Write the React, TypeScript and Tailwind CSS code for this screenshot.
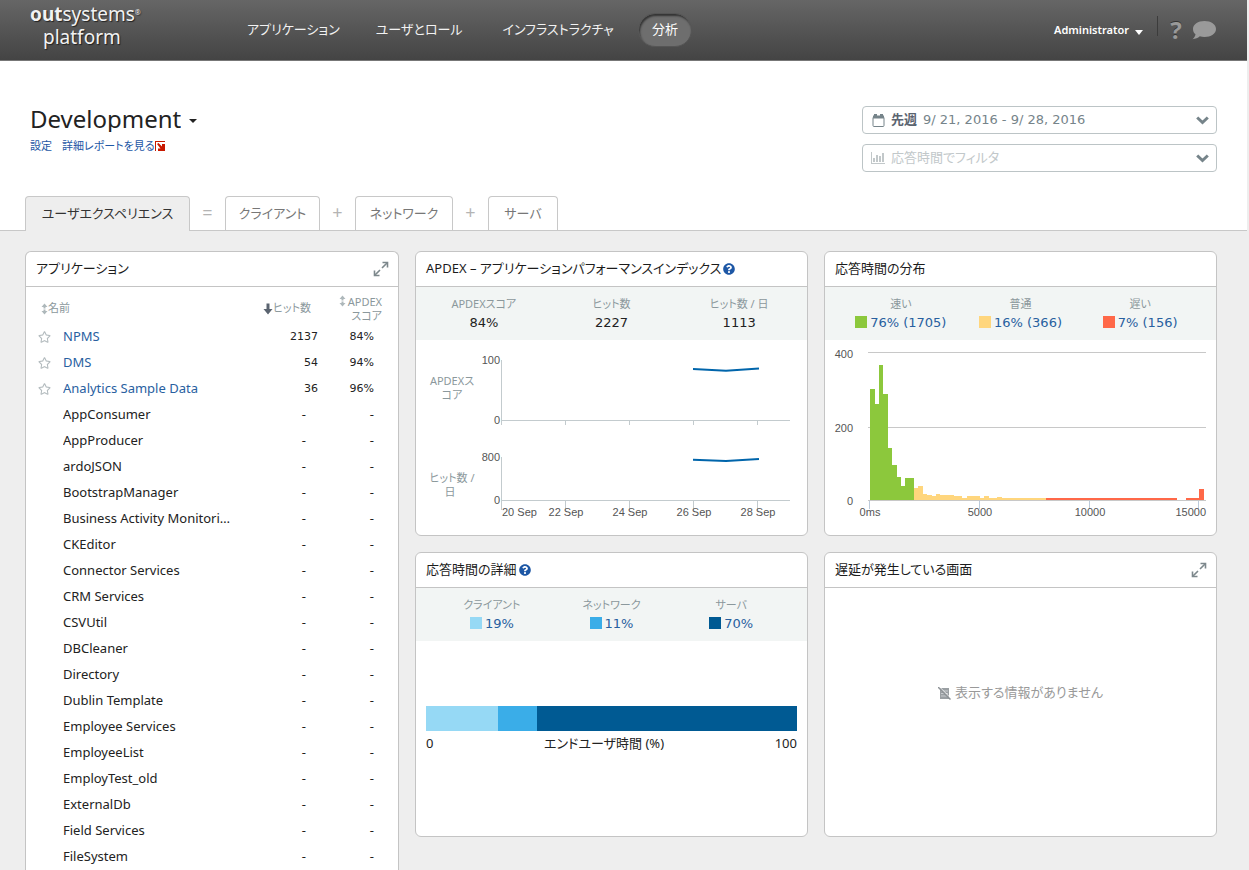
import React from 'react';
import { FaQuestionCircle, FaRegStar } from 'react-icons/fa';

interface AppRow {
  name: string;
  hits?: number;
  apdex?: string;
}

const apps: AppRow[] = [
  { name: 'NPMS', hits: 2137, apdex: '84%' },
  { name: 'DMS', hits: 54, apdex: '94%' },
  { name: 'Analytics Sample Data', hits: 36, apdex: '96%' },
  { name: 'AppConsumer' },
  { name: 'AppProducer' },
  { name: 'ardoJSON' },
  { name: 'BootstrapManager' },
  { name: 'Business Activity Monitori…' },
  { name: 'CKEditor' },
  { name: 'Connector Services' },
  { name: 'CRM Services' },
  { name: 'CSVUtil' },
  { name: 'DBCleaner' },
  { name: 'Directory' },
  { name: 'Dublin Template' },
  { name: 'Employee Services' },
  { name: 'EmployeeList' },
  { name: 'EmployTest_old' },
  { name: 'ExternalDb' },
  { name: 'Field Services' },
  { name: 'FileSystem' },
];

// [x, width, top] of each histogram bar, the baseline is at y = 160
const fastBars = [
  [45, 5, 49], [50, 4, 64], [54, 4, 25], [58, 5, 54], [63, 4, 108],
  [67, 5, 125], [72, 4, 137], [76, 4, 146], [80, 9, 138],
];
const normalBars = [
  [89, 4, 148], [93, 5, 146], [98, 4, 154], [102, 5, 155], [107, 4, 156],
  [111, 4, 154], [115, 14, 155], [129, 8, 156], [137, 5, 158], [142, 13, 156],
  [155, 4, 158], [159, 5, 156], [164, 8, 158], [172, 5, 157], [177, 44, 158],
];
const slowBars = [[221, 131, 158], [361, 13, 158], [374, 5, 149]];

const breakdown = [
  { label: 'クライアント', value: '19%', share: 19.4, box: 'bg-[#96d9f5]' },
  { label: 'ネットワーク', value: '11%', share: 10.5, box: 'bg-[#3aade8]' },
  { label: 'サーバ', value: '70%', share: 70.1, box: 'bg-[#005a93]' },
];

const distribution = [
  { label: '速い', value: '76% (1705)', box: 'bg-[#8cc83c]' },
  { label: '普通', value: '16% (366)', box: 'bg-[#ffd67d]' },
  { label: '遅い', value: '7% (156)', box: 'bg-[#ff6848]' },
];

const tabClass = 'h-[34px] rounded-t border border-b-0 border-[#c8c8c8] bg-white text-[#777]';

const ExpandIcon: React.FC = () => (
  <svg width="16" height="16" viewBox="0 0 16 16" fill="none" stroke="#7d888c" strokeWidth="1.6">
    <path d="M9.500 1.500H14.500V6.500M1.500 9.500V14.500H6.500" />
    <path d="M14 2L9 7M7 9L2 14" />
  </svg>
);

const ChevronIcon: React.FC = () => (
  <svg width="13" height="9" viewBox="0 0 13 9" fill="none" stroke="#76848a" strokeWidth="3" className="pointer-events-none absolute right-[7px]">
    <path d="M1.200 1.500L6.500 6.500L11.800 1.500" />
  </svg>
);

const SortIcon: React.FC = () => (
  <svg width="7" height="12" viewBox="0 0 7 12" fill="#aeb8bb" className="shrink-0">
    <path d="M3.500 0.500L6.500 4H4.500V5.500H2.500V4H0.500zM3.500 11.500L6.500 8H4.500V6.500H2.500V8H0.500z" />
  </svg>
);

interface CardProps {
  title: string;
  help?: boolean;
  expand?: boolean;
  className?: string;
  children?: React.ReactNode;
}

const Card: React.FC<CardProps> = ({ title, help, expand, className = 'rounded-md', children }) => (
  <section className={`flex min-h-[285px] flex-col overflow-hidden border border-[#c4c4c4] bg-white ${className}`}>
    <header className="flex h-[35px] shrink-0 items-center border-b border-[#c4c4c4] pr-[9px] pl-[10px]">
      <h2 className="text-[13px] text-[#1c1c1c]">{title}</h2>
      {help && (
        <button aria-label="ヘルプ" className="ml-[2px] text-[#1d57a5]">
          <FaQuestionCircle className="h-3 w-3" />
        </button>
      )}
      {expand && (
        <button aria-label="拡大" className="ml-auto">
          <ExpandIcon />
        </button>
      )}
    </header>
    {children}
  </section>
);

interface StatsProps {
  items: { label: string; value: string; box?: string }[];
  className: string;
}

const Stats: React.FC<StatsProps> = ({ items, className }) => (
  <dl className={`grid h-[53px] shrink-0 grid-cols-3 bg-[#f2f5f4] pt-2 text-center ${className}`}>
    {items.map(item => (
      <div key={item.label}>
        <dt className="text-[11px] leading-[18px] text-[#8b989c]">{item.label}</dt>
        <dd className="flex items-center justify-center gap-[3px] font-['DejaVu_Sans'] text-[13px] leading-5">
          {item.box ? (
            <>
              <span className={`mb-[2px] h-3 w-3 ${item.box}`} />
              <a href="#" className="text-[#28609f]">{item.value}</a>
            </>
          ) : (
            <span className="text-[#222]">{item.value}</span>
          )}
        </dd>
      </div>
    ))}
  </dl>
);

const ApdexChart: React.FC = () => (
  <svg viewBox="0 0 391 195" className="w-full">
    <g stroke="#c3cbce" fill="none">
      <path d="M85.500 20V85M85 80.500H374M149.500 80V85M213.500 80V85M277.500 80V85M341.500 80V85" />
      <path d="M85.500 117V170M85 160.500H374M149.500 160V170M213.500 160V170M277.500 160V170M341.500 160V170" />
    </g>
    <g stroke="#0065ab" strokeWidth="2" fill="none">
      <path d="M277 29L310 30.800L343 28.400" />
      <path d="M277 119.700L310 121L343 119" />
    </g>
    <g fontSize="11" fill="#555" className="font-['Liberation_Sans']">
      <g textAnchor="end">
        <text x="84" y="24">100</text>
        <text x="84" y="84">0</text>
        <text x="84" y="121">800</text>
        <text x="84" y="164">0</text>
      </g>
      <text x="86" y="176">20 Sep</text>
      <g textAnchor="middle">
        <text x="150" y="176">22 Sep</text>
        <text x="214" y="176">24 Sep</text>
        <text x="278" y="176">26 Sep</text>
        <text x="342" y="176">28 Sep</text>
      </g>
    </g>
    <g fontSize="11" fill="#8b989c" textAnchor="middle">
      <text x="36" y="45">APDEXス</text>
      <text x="36" y="59">コア</text>
      <text x="36" y="142">ヒット数 /</text>
      <text x="34" y="156">日</text>
    </g>
  </svg>
);

const Bars: React.FC<{ bars: number[][]; fill: string }> = ({ bars, fill }) => (
  <g fill={fill}>
    {bars.map(([x, width, top]) => (
      <rect key={x} x={x} y={top} width={width} height={160 - top} />
    ))}
  </g>
);

const DistributionChart: React.FC = () => (
  <svg viewBox="0 0 391 195" className="w-full" shapeRendering="crispEdges">
    <path d="M43 12.500H381M43 87.500H381M43 160.500H381" stroke="#c8c8c8" />
    <path d="M44.500 161V169M154.500 161V169M264.500 161V169M373.500 161V169" stroke="#bccbdc" />
    <Bars bars={fastBars} fill="#8cc83c" />
    <Bars bars={normalBars} fill="#ffd67d" />
    <Bars bars={slowBars} fill="#ff6848" />
    <g fontSize="11" fill="#555" className="font-['Liberation_Sans']">
      <g textAnchor="end">
        <text x="28" y="18">400</text>
        <text x="28" y="92">200</text>
        <text x="28" y="165">0</text>
        <text x="381" y="176">15000</text>
      </g>
      <g textAnchor="middle">
        <text x="45" y="176">0ms</text>
        <text x="155" y="176">5000</text>
        <text x="265" y="176">10000</text>
      </g>
    </g>
  </svg>
);

const AppsTable: React.FC = () => (
  <table className="w-full table-fixed border-collapse text-[13px] text-[#222]">
    <colgroup>
      <col className="w-[37px]" />
      <col />
      <col className="w-[60px]" />
      <col className="w-[80px]" />
    </colgroup>
    <thead className="text-[11px] text-[#8b989c]">
      <tr className="h-[37px]">
        <th colSpan={2} className="pt-[6px] pl-[15px] text-left font-normal">
          <button className="flex items-center">
            <SortIcon />
            名前
          </button>
        </th>
        <th className="pt-[6px] pr-[7px] font-normal">
          <button className="float-right flex items-center whitespace-nowrap">
            <svg width="10" height="12" viewBox="0 0 10 12" fill="#5b6470">
              <path d="M3.500 0.500H6.500V6H9.500L5 11.500L0.500 6H3.500z" />
            </svg>
            ヒット数
          </button>
        </th>
        <th className="pt-[6px] pr-4 font-normal">
          <button className="ml-auto flex items-start gap-[2px] text-right leading-[14px]">
            <SortIcon />
            <span>APDEX<br />スコア</span>
          </button>
        </th>
      </tr>
    </thead>
    <tbody>
      {apps.map(app => (
        <tr key={app.name} className="h-[26px]">
          <td className="pl-3">
            {app.hits && (
              <button aria-label="お気に入り" className="block text-[#b4bcbf]">
                <FaRegStar className="h-3 w-[13px]" />
              </button>
            )}
          </td>
          <td className="truncate">
            {app.hits ? <a href="#" className="text-[#28609f]">{app.name}</a> : app.name}
          </td>
          <td className={app.hits ? "text-right font-['DejaVu_Sans'] text-[11px]" : 'pr-3 text-right'}>
            {app.hits ?? '-'}
          </td>
          <td className={app.hits ? "pr-6 text-right font-['DejaVu_Sans'] text-[11px]" : 'pr-6 text-right'}>
            {app.apdex ?? '-'}
          </td>
        </tr>
      ))}
    </tbody>
  </table>
);

const TopBar: React.FC = () => (
  <header className="flex h-[61px] shrink-0 items-center border-b border-[#777] bg-linear-to-b from-[#666] to-[#444] pr-[31px] pl-[30px] text-[#f2f2f2]">
    <a href="#" className="mb-2 block w-[217px] text-[19px] leading-[23px] text-shadow-[1px_1px_1px_#222]">
      <span className="flex">
        <b>out</b>systems<sup className="top-1 text-[7px] leading-3">®</sup>
      </span>
      <span className="block pl-[13px]">platform</span>
    </a>
    <nav className="flex items-center text-[13px]">
      <a href="#" className="mr-9">アプリケーション</a>
      <a href="#" className="mr-10">ユーザとロール</a>
      <a href="#" className="mr-6">インフラストラクチャ</a>
      <a href="#" className="flex h-[34px] w-[54px] items-center justify-center rounded-full border border-[#555] bg-[#6e6e6e] text-white inset-shadow-[1px_2px_2px_#333]">分析</a>
    </nav>
    <div className="ml-auto flex items-center">
      <button className="flex items-center gap-[6px] text-[11px] font-semibold text-white">
        Administrator
        <svg width="8" height="5" viewBox="0 0 8 5" fill="#fff" className="mt-1"><path d="M0 0H8L4 5z" /></svg>
      </button>
      <span className="mr-3 mb-2 ml-[14px] h-5 w-px bg-[#3c3c3c]" />
      <button aria-label="ヘルプ" className="w-3 text-2xl leading-6 font-bold text-[#999] text-shadow-[0_-1px_0_#333]">?</button>
      <button aria-label="フィードバック" className="ml-[10px]">
        <svg width="24" height="19" viewBox="0 0 24 19" fill="#9a9a9a">
          <path d="M12.500 0C19 0 24 3.500 24 8C24 12.500 19 16 12.500 16C10.800 16 9.200 15.800 7.800 15.300C5.800 17 3.500 18 .5 18.200C2 17 3.200 15.500 3.500 13.300C1.800 12 1 10 1 8C1 3.500 6 0 12.500 0z" />
        </svg>
      </button>
    </div>
  </header>
);

const Filters: React.FC = () => (
  <div className="flex w-[355px] flex-col gap-[10px] text-[13px]">
    <div className="relative flex h-7 items-center rounded border border-[#bcc4c6] bg-white pl-[9px]">
      <svg width="13" height="13" viewBox="0 0 13 13" fill="none" stroke="#76848a" className="mr-[6px] shrink-0">
        <path d="M1 3.500H12V11.500Q12 12.500 11 12.500H2Q1 12.500 1 11.500z" />
        <path d="M1 3H12" strokeWidth="3" />
        <path d="M3.500 0V3M9.500 0V3" strokeWidth="3" />
      </svg>
      <label htmlFor="period" className="mr-[6px] font-bold text-[#5b6470]">先週</label>
      <select id="period" className="h-full grow appearance-none bg-transparent font-['DejaVu_Sans'] text-[#76848a]">
        <option>9/ 21, 2016 - 9/ 28, 2016</option>
      </select>
      <ChevronIcon />
    </div>
    <div className="relative flex h-7 items-center rounded border border-[#bcc4c6] bg-white pl-2">
      <svg width="14" height="12" viewBox="0 0 14 12" className="mr-[6px] shrink-0" fill="#c2c8ca">
        <path d="M0 0H1V11H14V12H0zM2 6H4V10H2zM5 3H7V10H5zM8 4H10V10H8zM11 1H13V10H11z" />
      </svg>
      <select aria-label="応答時間でフィルタ" className="h-full grow appearance-none bg-transparent text-[#c2c8ca]">
        <option>応答時間でフィルタ</option>
      </select>
      <ChevronIcon />
    </div>
  </div>
);

const App: React.FC = () => {
  return (
    <div className="h-screen overflow-hidden bg-[#eee] pr-[2px] font-['Noto_Sans','Noto_Sans_CJK_JP',sans-serif] [font-feature-settings:'palt']">
      <div className="flex h-full flex-col">
        <TopBar />

        <div className="flex shrink-0 items-start justify-between bg-white pr-[30px] pl-[30px] pt-[45px]">
          <div className="h-[90px]">
            <h1 className="flex items-center gap-2 text-2xl leading-[26px] text-[#222]">
              <select aria-label="環境" className="field-sizing-content appearance-none">
                <option>Development</option>
              </select>
              <svg width="8" height="4" viewBox="0 0 8 4" fill="#222" className="mt-1"><path d="M0 0H8L4 4z" /></svg>
            </h1>
            <div className="mt-[6px] flex items-center text-[11px] leading-4 text-[#1d57a5]">
              <a href="#" className="mr-[10px]">設定</a>
              <a href="#" className="flex items-center">
                詳細レポートを見る
                <svg width="10" height="10" viewBox="0 0 10 10" fill="#c81900">
                  <path d="M0 0H10V1H1V10H0z" />
                  <path d="M2 3L3.500 2L7 5.500V3H10V10H3V7.500H5.500z" />
                </svg>
              </a>
            </div>
          </div>
          <Filters />
        </div>

        <div role="tablist" className="flex shrink-0 items-end border-b border-[#c8c8c8] bg-white pl-[25px] text-[13px]">
          <button role="tab" aria-selected="true" className="-mb-px h-[35px] w-[165px] rounded-t border border-b-0 border-[#c8c8c8] bg-[#eee] text-[#333]">ユーザエクスペリエンス</button>
          <span className="w-[35px] pb-1 text-center text-lg text-[#b4b4b4]">=</span>
          <button role="tab" className={`w-[95px] ${tabClass}`}>クライアント</button>
          <span className="w-[35px] pb-1 text-center text-lg text-[#b4b4b4]">+</span>
          <button role="tab" className={`w-[98px] ${tabClass}`}>ネットワーク</button>
          <span className="w-[35px] pb-1 text-center text-lg text-[#b4b4b4]">+</span>
          <button role="tab" className={`w-[70px] ${tabClass}`}>サーバ</button>
        </div>

        <main className="grid min-h-0 grow grid-cols-[374fr_802fr] gap-4 pt-5 pr-[30px] pl-[25px]">
          <Card title="アプリケーション" expand className="rounded-t-md border-b-0">
            <AppsTable />
          </Card>

          <div className="grid grid-cols-2 content-start gap-4">
            <Card title="APDEX – アプリケーションパフォーマンスインデックス" help>
              <Stats
                className="px-1"
                items={[
                  { label: 'APDEXスコア', value: '84%' },
                  { label: 'ヒット数', value: '2227' },
                  { label: 'ヒット数 / 日', value: '1113' },
                ]}
              />
              <ApdexChart />
            </Card>

            <Card title="応答時間の分布">
              <Stats className="px-4" items={distribution} />
              <DistributionChart />
            </Card>

            <Card title="応答時間の詳細" help>
              <Stats className="px-4" items={breakdown} />
              <div className="px-[10px] pt-[65px] text-[13px] text-[#222]">
                <div className="flex h-[25px]">
                  {breakdown.map(part => (
                    <div key={part.label} className={part.box} style={{ width: `${part.share}%` }} />
                  ))}
                </div>
                <div className="mt-[2px] flex justify-between leading-5">
                  <span>0</span>
                  <span>エンドユーザ時間 (%)</span>
                  <span>100</span>
                </div>
              </div>
            </Card>

            <Card title="遅延が発生している画面" expand>
              <p className="flex grow items-center justify-center gap-1 pb-[38px] text-[13px] text-[#999]">
                <svg width="13" height="13" viewBox="0 0 13 13" fill="none">
                  <path d="M2 1H11V12H2z" fill="#9a9fa3" />
                  <path d="M3 4H10M3 6.500H10M3 9H10" stroke="#c9cccf" />
                  <path d="M1.500 0L13 11.500" stroke="#fff" />
                  <path d="M0 0L12.500 12.500" stroke="#8d9296" strokeWidth="1.500" />
                </svg>
                表示する情報がありません
              </p>
            </Card>
          </div>
        </main>
      </div>
    </div>
  );
};

export default App;
